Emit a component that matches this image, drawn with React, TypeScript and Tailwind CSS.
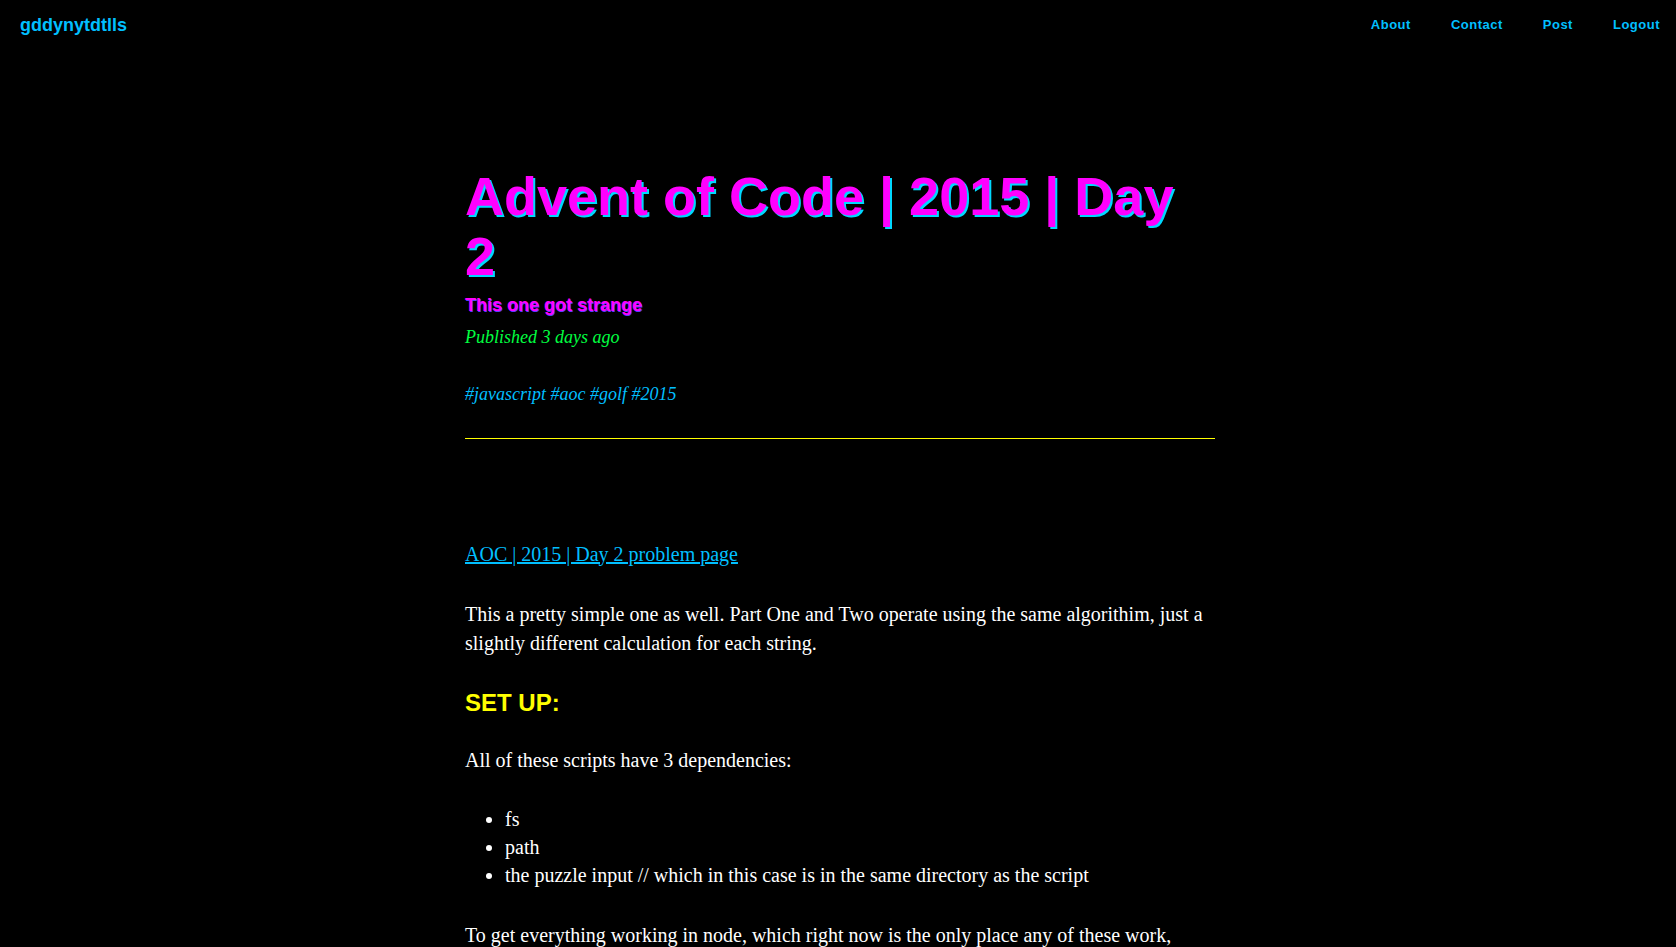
import React from "react";

const sans = "font-['Liberation_Sans','Helvetica','Arial',sans-serif]";
const serif = "font-['Liberation_Serif','Times_New_Roman',serif]";

export default function App() {
  return (
    <div className={`min-h-screen bg-black text-white ${serif}`}>
      <header className={`flex h-[52px] items-start justify-between pl-5 pr-4 ${sans}`}>
        <a className="pt-[16px] text-[18px] font-bold leading-[18px] text-[#00bfff]">gddynytdtlls</a>
        <nav className="flex gap-[40px] pt-[18px] text-[13px] font-bold leading-[13px] tracking-[0.5px] text-[#00bfff]">
          <a>About</a>
          <a>Contact</a>
          <a>Post</a>
          <a>Logout</a>
        </nav>
      </header>

      <main className="mx-auto w-[754px] pl-1 pt-[114px]">
        <h1
          className={`${sans} text-[54px] font-bold leading-[60px] text-[#ff00ff] [text-shadow:2px_2px_0_#00d8ff]`}
        >
          Advent of Code | 2015 | Day
          <br />2
        </h1>
        <h2
          className={`${sans} mt-[8px] text-[18px] font-bold leading-[22.5px] text-[#ff00ff] [text-shadow:1px_1px_0_#5a3cff]`}
        >
          This one got strange
        </h2>
        <p className="mt-[8px] text-[18px] italic leading-[24px] text-[#00ff40]">Published 3 days ago</p>
        <p className="mt-[33px] text-[18px] italic leading-[24px] text-[#00bfff]">
          #javascript #aoc #golf #2015
        </p>
        <div className="mt-[32px] h-px w-full bg-[#ffff00]" />

        <div className="mt-[101px] text-[20px] leading-[29px]">
          <a className="text-[#00bfff] underline">AOC | 2015 | Day 2 problem page</a>
          <p className="mt-[31px]">
            This a pretty simple one as well. Part One and Two operate using the same algorithim, just a slightly
            different calculation for each string.
          </p>
          <h3 className={`${sans} mt-[31px] text-[24px] font-bold leading-[28px] text-[#ffff00]`}>SET UP:</h3>
          <p className="mt-[29px]">All of these scripts have 3 dependencies:</p>
          <ul className="mt-[30px] list-disc pl-10 leading-[28px]">
            <li>fs</li>
            <li>path</li>
            <li>the puzzle input // which in this case is in the same directory as the script</li>
          </ul>
          <p className="mt-[32px]">
            To get everything working in node, which right now is the only place any of these work, you'll need to
            run the scripts from the command line.
          </p>
        </div>
      </main>
    </div>
  );
}
